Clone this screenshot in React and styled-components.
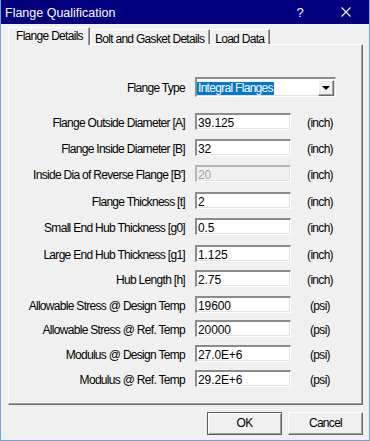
import React from "react";
import styled, { createGlobalStyle } from "styled-components";

const GlobalStyle = createGlobalStyle`
  html, body {
    margin: 0;
    padding: 0;
    background: #f0f0f0;
  }
  body {
    font-family: "Liberation Sans", Arial, sans-serif;
  }
`;

// the dialog font is a tall, condensed sans: squeeze Liberation Sans a little
const dialogFont = `
  font-family: "Liberation Sans", Arial, sans-serif;
  font-size: 12px;
  letter-spacing: -0.7px;
`;

const Window = styled.div`
  width: 370px;
  height: 441px;
  box-sizing: border-box;
  background: #f0f0f0;
  border-left: 1px solid #6fa3dc;
  border-right: 1px solid #6fa3dc;
  border-bottom: 1px solid #6fa3dc;
  display: flex;
  flex-direction: column;
`;

const TitleBar = styled.div`
  height: 24px;
  flex-shrink: 0;
  background: #000080;
  color: #fff;
  display: flex;
  align-items: center;
  padding-left: 4px;
  font-size: 12.5px;
`;

const TitleText = styled.span`
  padding-top: 1px;
`;

const TitleButtons = styled.div`
  margin-left: auto;
  display: flex;
  height: 24px;
`;

const CaptionButton = styled.div`
  width: 46px;
  height: 24px;
  display: flex;
  align-items: center;
  justify-content: center;
  font-size: 13px;
`;

const Content = styled.div`
  padding: 3px 6px 0 7px;
  display: flex;
  flex-direction: column;
`;

const TabStrip = styled.div`
  height: 17px;
  display: flex;
  align-items: flex-end;
  position: relative;
  z-index: 1;
`;

const Tab = styled.div`
  box-sizing: border-box;
  height: ${(p) => (p.$active ? "18px" : "15px")};
  margin-bottom: ${(p) => (p.$active ? "-1px" : "0")};
  padding: ${(p) => (p.$active ? "2px 6px 0 7px" : "3px 5px 0 4px")};
  ${dialogFont}
  line-height: 13px;
  color: #000;
  background: #f0f0f0;
  border-top: 1px solid #fff;
  border-left: 1px solid #fff;
  border-right: 1px solid #696969;
  box-shadow: inset -1px 0 0 #a0a0a0;
  white-space: nowrap;
`;

const Panel = styled.div`
  box-sizing: border-box;
  height: 361px;
  border-top: 1px solid #fff;
  border-left: 1px solid #fff;
  border-right: 1px solid #696969;
  border-bottom: 1px solid #696969;
  box-shadow: inset -1px -1px 0 #a0a0a0;
  padding-top: 32px;
  display: flex;
  flex-direction: column;
`;

const Row = styled.div`
  display: flex;
  align-items: center;
  margin-top: ${(p) => p.$space || 0}px;
`;

const Label = styled.div`
  width: 176px;
  margin-right: 10px;
  text-align: right;
  ${dialogFont}
  padding-top: ${(p) => p.$shift || 4}px;
  white-space: nowrap;
  color: #000;
`;

const Unit = styled.div`
  width: 58px;
  text-align: center;
  ${dialogFont}
  padding-top: 4px;
  color: #000;
`;

const TextBox = styled.input`
  box-sizing: border-box;
  width: 96px;
  height: 17px;
  margin: 0;
  padding: 3px 2px 0 1px;
  font-family: "Liberation Sans", Arial, sans-serif;
  font-size: 12px;
  letter-spacing: -0.1px;
  color: ${(p) => (p.disabled ? "#a0a0a0" : "#000")};
  background: ${(p) => (p.disabled ? "#f0f0f0" : "#fff")};
  border-top: 2px solid ${(p) => (p.disabled ? "#b4b4b4" : "#8c8c8c")};
  border-left: 2px solid ${(p) => (p.disabled ? "#b4b4b4" : "#8c8c8c")};
  border-right: 1px solid #fff;
  border-bottom: 1px solid #fff;
  box-shadow: inset -1px -1px 0 #e3e3e3;
  outline: none;
`;

const Combo = styled.div`
  box-sizing: border-box;
  width: 141px;
  height: 20px;
  background: #fff;
  border-top: 2px solid #8c8c8c;
  border-left: 2px solid #8c8c8c;
  border-right: 1px solid #fff;
  border-bottom: 1px solid #fff;
  box-shadow: inset -1px -1px 0 #e3e3e3;
  display: flex;
  align-items: center;
  padding-right: 1px;
`;

const Selected = styled.span`
  background: #0078d7;
  color: #fff;
  ${dialogFont}
  line-height: 13px;
  height: 13px;
  padding: 0 1px;
  margin-top: 1px;
  white-space: nowrap;
`;

const DropButton = styled.div`
  box-sizing: border-box;
  margin-left: auto;
  width: 16px;
  height: 16px;
  background: #f0f0f0;
  border-top: 1px solid #fff;
  border-left: 1px solid #fff;
  border-right: 1px solid #696969;
  border-bottom: 1px solid #696969;
  box-shadow: inset -1px -1px 0 #a0a0a0;
  display: flex;
  align-items: center;
  justify-content: center;
`;

const Arrow = styled.div`
  width: 0;
  height: 0;
  border-left: 4px solid transparent;
  border-right: 4px solid transparent;
  border-top: 4px solid #000;
  margin-top: 1px;
`;

const ButtonRow = styled.div`
  display: flex;
  justify-content: flex-end;
  gap: 6px;
  margin-top: 7px;
`;

const Button = styled.div`
  box-sizing: border-box;
  width: 75px;
  height: 23px;
  display: flex;
  align-items: center;
  justify-content: center;
  padding-bottom: 2px;
  ${dialogFont}
  color: #000;
  background: #f0f0f0;
  border: 1px solid ${(p) => (p.$default ? "#5a5a5a" : "#696969")};
  border-top-color: ${(p) => (p.$default ? "#5a5a5a" : "#fff")};
  border-left-color: ${(p) => (p.$default ? "#5a5a5a" : "#fff")};
  box-shadow: ${(p) =>
    p.$default
      ? "inset 1px 1px 0 #fff, inset -1px -1px 0 #a0a0a0"
      : "inset -1px -1px 0 #a0a0a0"};
`;

const fields = [
  { label: "Flange Outside Diameter [A]", value: "39.125", unit: "(inch)", space: 15 },
  { label: "Flange Inside Diameter [B]", value: "32", unit: "(inch)", space: 8 },
  { label: "Inside Dia of Reverse Flange [B']", value: "20", unit: "(inch)", space: 8, disabled: true },
  { label: "Flange Thickness [t]", value: "2", unit: "(inch)", space: 9 },
  { label: "Small End Hub Thickness [g0]", value: "0.5", unit: "(inch)", space: 8 },
  { label: "Large End Hub Thickness [g1]", value: "1.125", unit: "(inch)", space: 9 },
  { label: "Hub Length [h]", value: "2.75", unit: "(inch)", space: 7 },
  { label: "Allowable Stress @ Design Temp", value: "19600", unit: "(psi)", space: 8 },
  { label: "Allowable Stress @ Ref. Temp", value: "20000", unit: "(psi)", space: 6 },
  { label: "Modulus @ Design Temp", value: "27.0E+6", unit: "(psi)", space: 7 },
  { label: "Modulus @ Ref. Temp", value: "29.2E+6", unit: "(psi)", space: 7 },
];

const App = () => {
  return (
    <Window>
      <GlobalStyle />
      <TitleBar>
        <TitleText>Flange Qualification</TitleText>
        <TitleButtons>
          <CaptionButton>?</CaptionButton>
          <CaptionButton>
            <svg width="10" height="10" viewBox="0 0 10 10">
              <path d="M0.5 0.5 L9.5 9.5 M9.5 0.5 L0.5 9.5" stroke="#fff" strokeWidth="1.1" />
            </svg>
          </CaptionButton>
        </TitleButtons>
      </TitleBar>
      <Content>
        <TabStrip>
          <Tab $active>Flange Details</Tab>
          <Tab>Bolt and Gasket Details</Tab>
          <Tab>Load Data</Tab>
        </TabStrip>
        <Panel>
          <Row>
            <Label $shift={2}>Flange Type</Label>
            <Combo>
              <Selected>Integral Flanges</Selected>
              <DropButton>
                <Arrow />
              </DropButton>
            </Combo>
          </Row>
          {fields.map((f) => (
            <Row key={f.label} $space={f.space}>
              <Label>{f.label}</Label>
              <TextBox value={f.value} disabled={f.disabled} readOnly />
              <Unit>{f.unit}</Unit>
            </Row>
          ))}
        </Panel>
        <ButtonRow>
          <Button $default>OK</Button>
          <Button>Cancel</Button>
        </ButtonRow>
      </Content>
    </Window>
  );
};

export default App;
